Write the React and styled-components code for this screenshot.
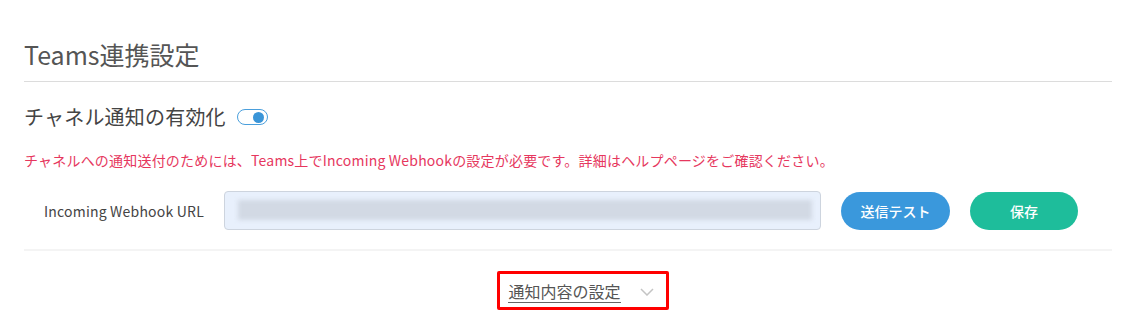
import React from 'react'
import styled, { createGlobalStyle } from 'styled-components'

const GlobalStyle = createGlobalStyle`
  body {
    margin: 0;
    background: #fff;
    font-family: "Noto Sans CJK JP", "Noto Sans", sans-serif;
  }
`

const Page = styled.div`
  width: 1137px;
  height: 333px;
  padding: 0 25px 0 24px;
  box-sizing: border-box;
  overflow: hidden;
`

const Header = styled.div`
  padding-top: 36px;
  padding-bottom: 8px;
  border-bottom: 1px solid #dcdcdc;
`

const Title = styled.h1`
  margin: 0;
  font-size: 25px;
  line-height: 37px;
  font-weight: 400;
  color: #555;
`

const ToggleRow = styled.div`
  display: flex;
  align-items: center;
  gap: 11px;
  margin-top: 20px;
  height: 30px;
`

const ToggleLabel = styled.span`
  font-size: 20px;
  line-height: 30px;
  letter-spacing: 0.2px;
  color: #444;
`

const Switch = styled.span`
  display: inline-flex;
  align-items: center;
  justify-content: ${p => (p.$on ? 'flex-end' : 'flex-start')};
  width: 31px;
  height: 16px;
  box-sizing: border-box;
  border: 1.5px solid #4a9fdc;
  border-radius: 8px;
  padding: 0 3px;
  background: #fff;

  &::after {
    content: '';
    width: 11px;
    height: 11px;
    border-radius: 50%;
    background: #3a95d8;
  }
`

const Notice = styled.p`
  margin: 18px 0 0;
  font-size: 14px;
  line-height: 21px;
  letter-spacing: 0.2px;
  color: #e6375e;
`

const FormRow = styled.div`
  display: flex;
  align-items: center;
  margin-top: 20px;
  padding-bottom: 19px;
  border-bottom: 2px solid #f4f4f4;
`

const Label = styled.label`
  flex-shrink: 0;
  width: 200px;
  padding-left: 20px;
  box-sizing: border-box;
  font-size: 14px;
  letter-spacing: 0.2px;
  color: #444;
`

const Field = styled.div`
  flex-shrink: 0;
  width: 597px;
  height: 39px;
  box-sizing: border-box;
  border: 1px solid #cdd4de;
  border-radius: 4px;
  background: #e8f0fc;
  padding: 8px 8px 0 13px;
  overflow: hidden;
`

const Blurred = styled.div`
  height: 20px;
  background: #d2d9e4;
  filter: blur(2px);
`

const Button = styled.button`
  flex-shrink: 0;
  margin-left: 20px;
  width: ${p => p.$w}px;
  height: 38px;
  border: none;
  border-radius: 19px;
  background: ${p => p.$bg};
  color: #fff;
  font-family: inherit;
  font-size: 14px;
  font-weight: 500;
`

const ExpanderRow = styled.div`
  display: flex;
  justify-content: center;
  margin-top: 20px;
`

const Expander = styled.div`
  display: flex;
  align-items: center;
  margin-left: 30px;
  height: 39px;
  box-sizing: border-box;
  border: 3px solid #f00;
  border-radius: 2px;
  padding: 0 12px 0 8px;
`

const ExpanderText = styled.span`
  font-size: 16px;
  line-height: 20px;
  color: #555;
  border-bottom: 1px solid #666;
  padding-bottom: 1px;
  margin-top: 3px;
`

const Chevron = styled.svg`
  margin-left: 19px;
  margin-top: 2px;
`

export default function App() {
  return (
    <Page>
      <GlobalStyle />
      <Header>
        <Title>Teams連携設定</Title>
      </Header>
      <ToggleRow>
        <ToggleLabel>チャネル通知の有効化</ToggleLabel>
        <Switch $on />
      </ToggleRow>
      <Notice>
        チャネルへの通知送付のためには、Teams上でIncoming Webhookの設定が必要です。詳細はヘルプページをご確認ください。
      </Notice>
      <FormRow>
        <Label>Incoming Webhook URL</Label>
        <Field>
          <Blurred />
        </Field>
        <Button $w={109} $bg="#3a98dc">送信テスト</Button>
        <Button $w={108} $bg="#1ebd9b">保存</Button>
      </FormRow>
      <ExpanderRow>
        <Expander>
          <ExpanderText>通知内容の設定</ExpanderText>
          <Chevron width="14" height="8" viewBox="0 0 14 8">
            <path d="M1 1l6 6 6-6" fill="none" stroke="#c4c4c4" strokeWidth="1.5" />
          </Chevron>
        </Expander>
      </ExpanderRow>
    </Page>
  )
}
